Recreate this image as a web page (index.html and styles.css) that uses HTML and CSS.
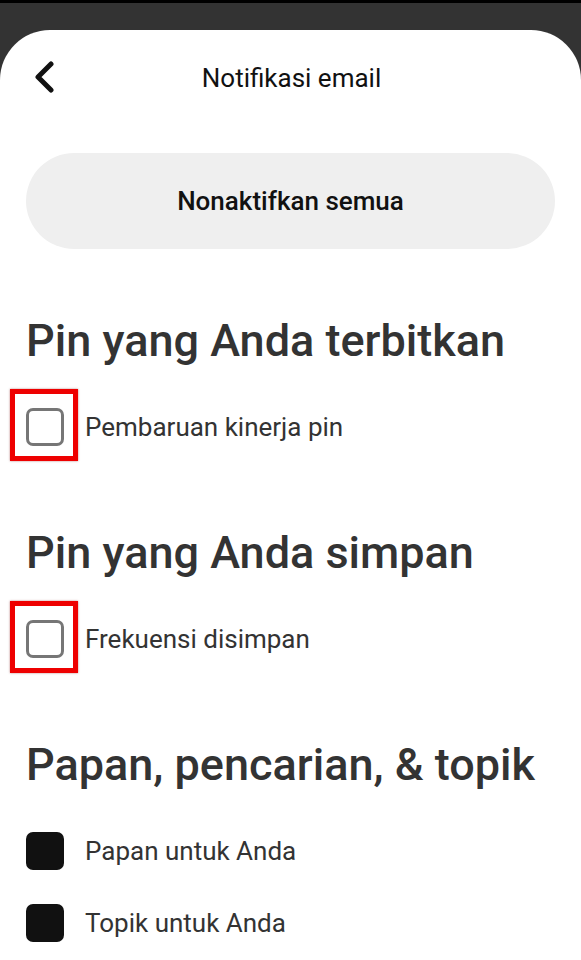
FILE: index.html
```html
<!DOCTYPE html>
<html lang="id">
<head>
    <meta charset="UTF-8">
    <meta name="viewport" content="width=device-width, initial-scale=1.0">
    <title>Notifikasi email</title>
    <link rel="stylesheet" href="styles.css">
</head>
<body>
    <div class="sheet">
        <header class="top-bar">
            <button class="back-btn" aria-label="Kembali">
                <svg width="24" height="34" viewBox="0 0 24 34">
                    <path d="M17 3 L4 16 L17 29" fill="none" stroke="#111" stroke-width="5" stroke-linecap="round" stroke-linejoin="round"/>
                </svg>
            </button>
            <h1>Notifikasi email</h1>
        </header>

        <button class="off-all">Nonaktifkan semua</button>

        <section class="group first">
            <h2>Pin yang Anda terbitkan</h2>
            <label class="option">
                <span class="box marked"></span>
                <span>Pembaruan kinerja pin</span>
            </label>
        </section>

        <section class="group">
            <h2>Pin yang Anda simpan</h2>
            <label class="option">
                <span class="box marked"></span>
                <span>Frekuensi disimpan</span>
            </label>
        </section>

        <section class="group">
            <h2>Papan, pencarian, &amp; topik</h2>
            <label class="option">
                <span class="box checked"></span>
                <span>Papan untuk Anda</span>
            </label>
            <label class="option">
                <span class="box checked"></span>
                <span>Topik untuk Anda</span>
            </label>
        </section>
    </div>
</body>
</html>
```

FILE: styles.css
```css
body {
    margin: 0;
    background: #333333;
    border-top: 3px solid #000000;
    font-family: Roboto, 'Liberation Sans', sans-serif;
    color: #333333;
    overflow: hidden;
}

.sheet {
    margin-top: 27px;
    background: #ffffff;
    border-radius: 50px 50px 0 0;
    min-height: 960px;
    padding: 0 26px;
}

.top-bar {
    position: relative;
    height: 96px;
    display: flex;
    align-items: center;
    justify-content: center;
}

.top-bar h1 {
    margin: 0 0 0 2px;
    font-size: 26px;
    font-weight: 400;
    color: #111111;
}

.back-btn {
    position: absolute;
    left: 8px;
    top: 31px;
    padding: 0;
    border: none;
    background: none;
    display: flex;
}

.off-all {
    display: block;
    width: 100%;
    height: 96px;
    margin-top: 27px;
    border: none;
    border-radius: 48px;
    background: #efefef;
    font-family: inherit;
    font-size: 26px;
    font-weight: 500;
    color: #111111;
}

.group h2 {
    margin: 66px 0 26px;
    font-size: 45px;
    line-height: 48px;
    font-weight: 500;
    color: #333333;
}

.group.first h2 {
    margin-top: 68px;
}

.option {
    display: flex;
    align-items: center;
    gap: 21px;
    height: 72px;
    font-size: 26px;
    color: #333333;
}

.box {
    position: relative;
    flex: none;
    width: 38px;
    height: 38px;
    box-sizing: border-box;
    border-radius: 7px;
}

.box.marked {
    border: 3px solid #767676;
}

.box.checked {
    background: #111111;
}

/* red highlight frame around the empty boxes */
.box.marked::after {
    content: "";
    position: absolute;
    left: -19px;
    top: -22px;
    right: -17px;
    bottom: -18px;
    border: 5px solid #ee0000;
    box-shadow: 0 0 2px rgba(120, 0, 0, 0.5);
}
```
